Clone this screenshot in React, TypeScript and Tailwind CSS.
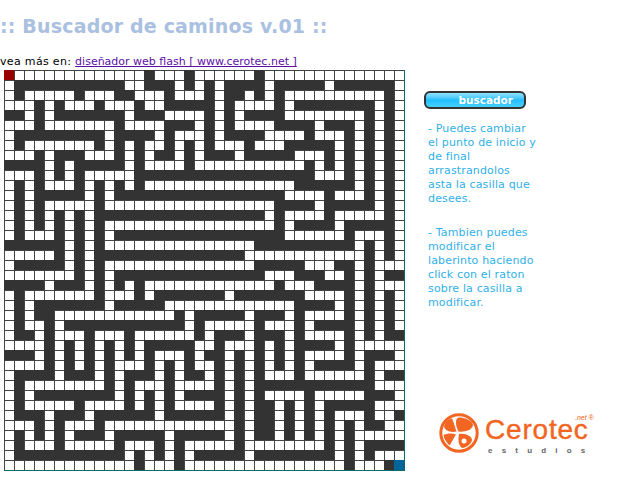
const rows: string[] = [
  "S........." + "....#...#." + ".....#...." + "..........",
  ".#########" + "##..###.#." + "#.####.###" + "##.######.",
  ".#.....#.." + ".##...#..." + "#.##.#.#.." + "........#.",
  "...#.#...#" + "...#..####" + "#.#....#.#" + "#######.#.",
  "##.#.#####" + "##.###...." + "#.#.####.." + "......#.#.",
  "...#......" + ".#....###." + "#.#....###" + "#.###.#.#.",
  ".#########" + ".####.#..." + "#.####...." + "#...#.#.#.",
  ".#.......#" + ".#.#..#.#." + "#...#...##" + "###.#.#.#.",
  "...#.###.." + ".#.#.##.#." + "###.#####." + "..#.#.#.#.",
  "####.#.###" + "##.#....#." + ".........." + "#.#.#.#.#.",
  "...#.#.#.." + "...#######" + "##########" + "#...#.#.#.",
  ".#.#...#.#" + ".#.#......" + ".........#" + "#####.#.#.",
  ".#.#####.#" + ".#########" + "########.." + "..#...#.#.",
  ".#.#.....#" + ".........." + ".......###" + "#.#####.#.",
  ".#.#.#.#.#" + "##########" + "######.#.." + "..#.....#.",
  ".#.#.#.#.#" + ".........." + ".......#.#" + "###.#####.",
  ".#...#.#.#" + ".#########" + "########.." + "....#...#.",
  "######.#.#" + ".........." + ".....#####" + "#####.#.#.",
  ".....#.#.#" + "##########" + "####......" + "......#.#.",
  ".#####.#.#" + ".........." + ".....#####" + "...##.#...",
  ".......#.#" + ".#########" + "######...#" + "##..#.#.##",
  "####.###.#" + ".#.#......" + ".......#.." + ".####.#...",
  ".#.......#" + "...#.#####" + "##.#######" + "....#.#.#.",
  ".#.#######" + ".#####...." + ".........#" + "###.#.#.#.",
  ".#.##....." + ".......#.#" + "####.###.#" + "....#.#.#.",
  ".#..#.####" + "########.#" + ".....#...#" + ".####.#.#.",
  ".##.#...#." + "..#......#" + ".###.###.#" + "....#.#.##",
  "....#.#.#." + "#.#.#####." + ".#...#.#.#" + "###.#.....",
  "###.#.#.#." + "#.#.#...#." + "##.#.#.#.#" + "....#.###.",
  "....#.#.#." + "#...#.#.#." + ".#.#.#.#.#" + ".####.#...",
  ".####.###." + "#.###.#.##" + ".#.#.#...#" + "......#.##",
  ".#........" + "#.#...#..." + ".#.#.#####" + "#######...",
  ".#.#######" + "#.#.#.#.##" + "##.#.#...." + "#.....###.",
  ".#.....#.." + "..#.#.#..." + ".#.#.##.#." + "#.#####...",
  ".###.###.#" + "#####.####" + "##.#.##.#." + "#.#...#..#",
  "...#.#...#" + ".........." + "...#.##.#." + "#.#.#.##..",
  ".#.#.#.###" + ".#####.###" + "##.#.##.#." + "#.#.#.....",
  ".#...#...." + ".#...#.#.." + "...#......" + "..#.#.####",
  ".#########" + "##.#.#.#.#" + "####.#####" + "###.#.#...",
  ".........." + "...#...#.." + ".........." + "....#...#B",
];

function Cell({ v }: { v: string }) {
  if (v === "S") return <div className="h-[10px] w-[10px] bg-[#990000]" />;
  if (v === "B") return <div className="h-[10px] w-[10px] bg-[#006699]" />;
  if (v === "#") return <div className="h-[10px] w-[10px] bg-[#333333]" />;
  return <div className="h-[10px] w-[10px] border-l border-t border-[#444444] bg-white" />;
}

function Logo() {
  return (
    <div className="ml-[14px] mt-[102px] flex w-[170px] items-start">
      <svg width="42" height="42" viewBox="0 0 42 42" className="shrink-0">
        <circle cx="21" cy="21" r="18.2" fill="none" stroke="#f26522" strokeWidth="3" />
        <path d="M20.500 19.500C17 13 17 6 21 5.500C27 5 35 9 35 13.500C34 18 26 20.500 20.500 19.500Z" fill="#f26522" />
        <path d="M18.500 19.500C12 21 6.500 18 6 14.500C7 10 11 7 14 6.500C16 11 17 15 18.500 19.500Z" fill="#f26522" />
        <path d="M18 22.500C15 27 13 32 11.500 33.500C8 30 5.500 26 5.500 23C10 21 14 21 18 22.500Z" fill="#f26522" />
        <path d="M21 22C27 20.500 34 24 34 28C33.500 32 28 36 24 36C20 33 20 27 21 22Z" fill="#f26522" />
        <circle cx="26" cy="29" r="2.500" fill="white" />
      </svg>
      <div className="relative ml-[5px] font-['Liberation_Sans',sans-serif]">
        <div className="mb-[8px] mt-[10px] text-[28px] leading-[16px] tracking-[0.8px] text-[#f26522] [-webkit-text-stroke:0.4px_#f26522]">Cerotec</div>
        <div className="ml-[3px] text-[8px] font-bold leading-[9px] tracking-[9.2px] text-[#666666]">estudios</div>
        <div className="absolute left-[90px] top-[2px] whitespace-nowrap text-[7px] italic leading-[8px] text-[#f26522]">.net ®</div>
      </div>
    </div>
  );
}

export default function App() {
  return (
    <div className="h-[502px] w-[619px] overflow-hidden bg-white font-['DejaVu_Sans','Liberation_Sans',sans-serif] text-[11px] text-black">
      <h1 className="pt-[15px] text-[19px] font-bold leading-[22px] tracking-[0.18px] text-[#a9c0e0]">:: Buscador de caminos v.01 ::</h1>
      <p className="mt-[18px] h-[15px] leading-[13px]">
        <span className="tracking-[0.33px]">vea más en: </span>
        <a className="text-[#5b0fa8] underline">diseñador web flash [ www.cerotec.net ]</a>
      </p>
      <div className="flex">
        <div className="ml-[4px] grid w-[401px] grid-cols-[repeat(40,10px)] border-b border-r border-[#0b6b6b]">
          {rows.map((r, y) => r.split("").map((c, x) => <Cell key={y + "-" + x} v={c} />))}
        </div>
        <div className="flex flex-col pl-[19px] pt-[21px]">
          <button className="flex h-[18px] w-[102px] items-center justify-end rounded-[6px] border-2 border-[#333333] bg-gradient-to-b from-[#8fe3ff] via-[#1fc0fb] to-[#45d0ff] pr-[11px] text-[10.500px] font-bold leading-none text-white">
            buscador
          </button>
          <div className="ml-[4px] mt-[13px] flex w-[108px] flex-col gap-[20px] text-[11px] leading-[14px] tracking-[0.15px] text-[#2fb0e8]">
            <p>- Puedes cambiar el punto de inicio y de final arrastrandolos asta la casilla que desees.</p>
            <p>- Tambien puedes modificar el laberinto haciendo click con el raton sobre la casilla a modificar.</p>
          </div>
          <Logo />
        </div>
      </div>
    </div>
  );
}
